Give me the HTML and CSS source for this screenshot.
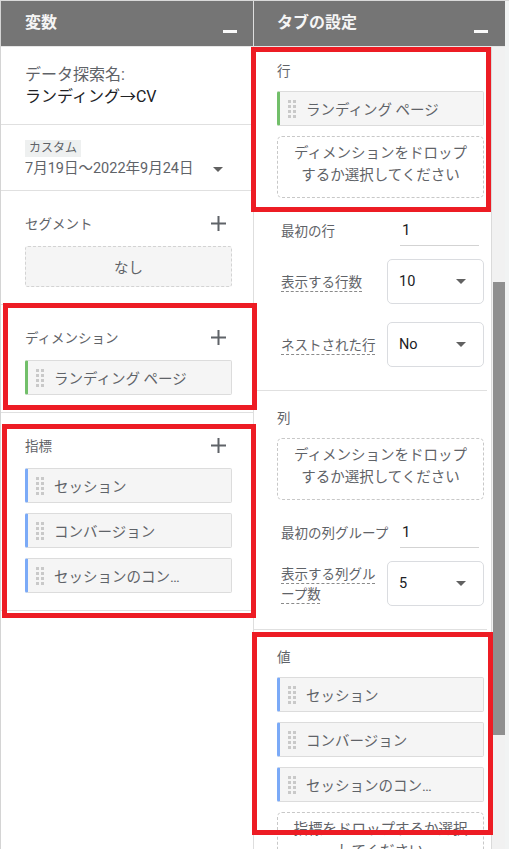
FILE: index.html
```html
<html>
<head>
    <meta charset="utf-8">
    <title>データ探索</title>
    <link rel="stylesheet" href="styles.css">
</head>
<body>
    <div class="app">
        <!-- left pane: variables -->
        <section class="pane pane-vars">
            <div class="pane-head">
                <div class="pane-title">変数</div>
                <div class="minimize"></div>
            </div>
            <div class="var-block name-block">
                <div class="name-label">データ探索名:</div>
                <div class="name-value">ランディング→CV</div>
            </div>
            <div class="var-block date-block">
                <span class="tag">カスタム</span>
                <div class="date-row">
                    <span>7月19日～2022年9月24日</span>
                    <span class="caret"></span>
                </div>
            </div>
            <div class="var-block">
                <div class="var-head">
                    <span>セグメント</span>
                    <svg class="plus" width="15" height="15" viewBox="0 0 15 15"><path d="M7.5 0v15M0 7.5h15"/></svg>
                </div>
                <div class="none-box">なし</div>
            </div>
            <div class="var-block">
                <div class="var-head">
                    <span>ディメンション</span>
                    <svg class="plus" width="15" height="15" viewBox="0 0 15 15"><path d="M7.5 0v15M0 7.5h15"/></svg>
                </div>
                <div class="chip dim">
                    <svg class="grip" width="8" height="18" viewBox="0 0 8 18"><rect x="0" y="0" width="3" height="3"/><rect x="5" y="0" width="3" height="3"/><rect x="0" y="5" width="3" height="3"/><rect x="5" y="5" width="3" height="3"/><rect x="0" y="10" width="3" height="3"/><rect x="5" y="10" width="3" height="3"/><rect x="0" y="15" width="3" height="3"/><rect x="5" y="15" width="3" height="3"/></svg>
                    <span class="chip-text">ランディング ページ</span>
                </div>
            </div>
            <div class="var-block">
                <div class="var-head">
                    <span>指標</span>
                    <svg class="plus" width="15" height="15" viewBox="0 0 15 15"><path d="M7.5 0v15M0 7.5h15"/></svg>
                </div>
                <div class="chip metric">
                    <svg class="grip" width="8" height="18" viewBox="0 0 8 18"><rect x="0" y="0" width="3" height="3"/><rect x="5" y="0" width="3" height="3"/><rect x="0" y="5" width="3" height="3"/><rect x="5" y="5" width="3" height="3"/><rect x="0" y="10" width="3" height="3"/><rect x="5" y="10" width="3" height="3"/><rect x="0" y="15" width="3" height="3"/><rect x="5" y="15" width="3" height="3"/></svg>
                    <span class="chip-text">セッション</span>
                </div>
                <div class="chip metric">
                    <svg class="grip" width="8" height="18" viewBox="0 0 8 18"><rect x="0" y="0" width="3" height="3"/><rect x="5" y="0" width="3" height="3"/><rect x="0" y="5" width="3" height="3"/><rect x="5" y="5" width="3" height="3"/><rect x="0" y="10" width="3" height="3"/><rect x="5" y="10" width="3" height="3"/><rect x="0" y="15" width="3" height="3"/><rect x="5" y="15" width="3" height="3"/></svg>
                    <span class="chip-text">コンバージョン</span>
                </div>
                <div class="chip metric">
                    <svg class="grip" width="8" height="18" viewBox="0 0 8 18"><rect x="0" y="0" width="3" height="3"/><rect x="5" y="0" width="3" height="3"/><rect x="0" y="5" width="3" height="3"/><rect x="5" y="5" width="3" height="3"/><rect x="0" y="10" width="3" height="3"/><rect x="5" y="10" width="3" height="3"/><rect x="0" y="15" width="3" height="3"/><rect x="5" y="15" width="3" height="3"/></svg>
                    <span class="chip-text">セッションのコンバージョン率</span>
                </div>
            </div>
        </section>

        <!-- right pane: tab settings -->
        <section class="pane pane-settings">
            <div class="pane-head">
                <div class="pane-title">タブの設定</div>
                <div class="minimize"></div>
            </div>
            <div class="settings-body">
                <div class="settings-scroll">
                    <div class="set-block first">
                        <div class="set-label">行</div>
                        <div class="chip dim">
                            <svg class="grip" width="8" height="18" viewBox="0 0 8 18"><rect x="0" y="0" width="3" height="3"/><rect x="5" y="0" width="3" height="3"/><rect x="0" y="5" width="3" height="3"/><rect x="5" y="5" width="3" height="3"/><rect x="0" y="10" width="3" height="3"/><rect x="5" y="10" width="3" height="3"/><rect x="0" y="15" width="3" height="3"/><rect x="5" y="15" width="3" height="3"/></svg>
                            <span class="chip-text">ランディング ページ</span>
                        </div>
                        <div class="drop-zone">ディメンションをドロップするか選択してください</div>
                        <div class="field field-top">
                            <div class="field-label">最初の行</div>
                            <div class="text-input">1</div>
                        </div>
                        <div class="field">
                            <div class="field-label"><span class="hint">表示する行数</span></div>
                            <div class="select">10<span class="caret"></span></div>
                        </div>
                        <div class="field">
                            <div class="field-label"><span class="hint">ネストされた行</span></div>
                            <div class="select">No<span class="caret"></span></div>
                        </div>
                    </div>
                    <div class="set-block">
                        <div class="set-label">列</div>
                        <div class="drop-zone">ディメンションをドロップするか選択してください</div>
                        <div class="field field-top">
                            <div class="field-label">最初の列グループ</div>
                            <div class="text-input">1</div>
                        </div>
                        <div class="field">
                            <div class="field-label"><span class="hint">表示する列グループ数</span></div>
                            <div class="select">5<span class="caret"></span></div>
                        </div>
                    </div>
                    <div class="set-block">
                        <div class="set-label">値</div>
                        <div class="chip metric">
                            <svg class="grip" width="8" height="18" viewBox="0 0 8 18"><rect x="0" y="0" width="3" height="3"/><rect x="5" y="0" width="3" height="3"/><rect x="0" y="5" width="3" height="3"/><rect x="5" y="5" width="3" height="3"/><rect x="0" y="10" width="3" height="3"/><rect x="5" y="10" width="3" height="3"/><rect x="0" y="15" width="3" height="3"/><rect x="5" y="15" width="3" height="3"/></svg>
                            <span class="chip-text">セッション</span>
                        </div>
                        <div class="chip metric">
                            <svg class="grip" width="8" height="18" viewBox="0 0 8 18"><rect x="0" y="0" width="3" height="3"/><rect x="5" y="0" width="3" height="3"/><rect x="0" y="5" width="3" height="3"/><rect x="5" y="5" width="3" height="3"/><rect x="0" y="10" width="3" height="3"/><rect x="5" y="10" width="3" height="3"/><rect x="0" y="15" width="3" height="3"/><rect x="5" y="15" width="3" height="3"/></svg>
                            <span class="chip-text">コンバージョン</span>
                        </div>
                        <div class="chip metric">
                            <svg class="grip" width="8" height="18" viewBox="0 0 8 18"><rect x="0" y="0" width="3" height="3"/><rect x="5" y="0" width="3" height="3"/><rect x="0" y="5" width="3" height="3"/><rect x="5" y="5" width="3" height="3"/><rect x="0" y="10" width="3" height="3"/><rect x="5" y="10" width="3" height="3"/><rect x="0" y="15" width="3" height="3"/><rect x="5" y="15" width="3" height="3"/></svg>
                            <span class="chip-text">セッションのコンバージョン率</span>
                        </div>
                        <div class="drop-zone">指標をドロップするか選択してください</div>
                    </div>
                </div>
                <div class="scrollbar"><div class="thumb"></div></div>
            </div>
        </section>
    </div>

    <!-- red highlight frames -->
    <div class="mark mark-rows"></div>
    <div class="mark mark-dim"></div>
    <div class="mark mark-metrics"></div>
    <div class="mark mark-values"></div>
</body>
</html>
```

FILE: styles.css
```css
body {
    margin: 0;
    position: relative;
    height: 849px;
    overflow: hidden;
    background-color: #f1f3f3;
    font-family: Roboto, "Noto Sans CJK JP", sans-serif;
    color: #5f6368;
}
.app {
    display: flex;
    height: 848px;
    border-top: 1px solid #d9d9d9;
}
.pane {
    display: flex;
    flex-direction: column;
    background-color: #ffffff;
}
.pane-vars {
    width: 254px;
    box-sizing: border-box;
    border-left: 1px solid #d4d4d4;
    border-right: 1px solid #dedede;
}
.pane-settings {
    width: 251px;
}
.pane-head {
    height: 45px;
    flex: none;
    display: flex;
    align-items: center;
    background-color: #757575;
    border-bottom: 1px solid #e6e6e6;
    padding: 0 16px 0 24px;
}
.pane-settings .pane-head {
    padding: 0 17px 0 23px;
}
.pane-title {
    flex: 1;
    font-size: 16px;
    font-weight: bold;
    line-height: 22px;
    margin-top: -2px;
    color: #f5f5f5;
}
.minimize {
    width: 14px;
    height: 3px;
    background-color: #fafafa;
    align-self: flex-end;
    margin-bottom: 13px;
}

/* left pane blocks */
.var-block {
    padding: 20px 21px 17px 24px;
    border-bottom: 1px solid #e0e0e0;
}
.name-block {
    padding-top: 17px;
    padding-bottom: 16px;
    font-size: 16px;
    line-height: 22px;
}
.name-value {
    color: #202124;
}
.date-block {
    padding-top: 15px;
    padding-bottom: 11px;
}
.tag {
    display: inline-block;
    height: 17px;
    line-height: 17px;
    padding: 0 4px;
    font-size: 12px;
    background-color: #eef0f0;
    color: #5f6368;
}
.date-row {
    display: flex;
    align-items: center;
    margin-top: 2px;
    font-size: 14.5px;
    line-height: 20px;
}
.date-row .caret {
    margin-left: 19px;
}
.caret {
    width: 0;
    height: 0;
    border-left: 5px solid transparent;
    border-right: 5px solid transparent;
    border-top: 5px solid #616161;
}
.var-head {
    display: flex;
    justify-content: space-between;
    align-items: center;
    height: 24px;
    margin-bottom: 11px;
    font-size: 13.5px;
}
.plus {
    margin-right: 6px;
    stroke: #5f6368;
    stroke-width: 2;
}
.none-box {
    height: 41px;
    box-sizing: border-box;
    display: flex;
    justify-content: center;
    align-items: center;
    border: 1px dashed #d3d3d3;
    border-radius: 3px;
    background-color: #f5f5f5;
    font-size: 14.5px;
}

/* dimension / metric chips */
.chip {
    height: 35px;
    box-sizing: border-box;
    display: flex;
    align-items: center;
    padding-right: 42px;
    background-color: #f5f5f5;
    border: 1px solid #dcdcdc;
    border-radius: 2px;
    font-size: 14.5px;
    color: #5f6368;
}
.chip + .chip {
    margin-top: 10px;
}
.chip.dim {
    border-left: 3px solid #72bf6a;
}
.chip.metric {
    border-left: 3px solid #7baaf7;
}
.grip {
    flex: none;
    margin-left: 8px;
    fill: #c9c9c9;
}
.chip-text {
    flex: 1;
    min-width: 0;
    margin-left: 10px;
    white-space: nowrap;
    overflow: hidden;
    text-overflow: ellipsis;
}

/* right pane */
.settings-body {
    flex: 1;
    min-height: 0;
    display: flex;
    overflow: hidden;
}
.settings-scroll {
    width: 237px;
    padding-right: 4px;
    box-sizing: border-box;
}
.set-block {
    padding: 17px 3px 23px 23px;
    border-bottom: 1px solid #e0e0e0;
}
.set-block.first {
    padding-top: 14px;
}
.set-label {
    font-size: 13.5px;
    line-height: 20px;
    margin-bottom: 10px;
}
.chip + .drop-zone {
    margin-top: 10px;
}
.drop-zone {
    padding: 6px 10px 10px;
    border: 1px dashed #c8c8c8;
    border-radius: 5px;
    text-align: center;
    font-size: 14.5px;
    line-height: 22px;
}
.field {
    display: flex;
    align-items: center;
    height: 45px;
    padding-left: 4px;
    margin-top: 18px;
}
.field-top {
    margin-top: 10px;
}
.field-top + .field {
    margin-top: 6px;
}
.field-label {
    width: 100px;
    font-size: 13.5px;
    line-height: 20px;
}
.field-top .field-label {
    width: auto;
    white-space: nowrap;
}
.hint {
    text-decoration: underline dashed #8a8a8a;
    text-decoration-thickness: 1px;
    text-underline-offset: 4px;
}
.text-input {
    margin-left: auto;
    margin-right: 5px;
    width: 79px;
    height: 31px;
    box-sizing: border-box;
    padding-left: 2px;
    border-bottom: 1px solid #d3d3d3;
    font-size: 15px;
    line-height: 30px;
    color: #202124;
}
.select {
    margin-left: auto;
    width: 97px;
    height: 45px;
    box-sizing: border-box;
    display: flex;
    align-items: center;
    justify-content: space-between;
    padding: 0 17px 0 11px;
    border: 1px solid #dadce0;
    border-radius: 5px;
    font-size: 14.5px;
    color: #202124;
}
.scrollbar {
    width: 14px;
    box-sizing: border-box;
    border-left: 1px solid #dadada;
    background-color: #f1f1f1;
}
.thumb {
    width: 12px;
    height: 453px;
    margin: 235px 0 0 1px;
    background-color: #8f8f8f;
}

/* red highlight frames */
.mark {
    position: absolute;
    box-sizing: border-box;
    border: 5px solid #ed1c24;
    pointer-events: none;
}
.mark-rows {
    left: 251px;
    top: 47px;
    width: 240px;
    height: 165px;
}
.mark-dim {
    left: 3px;
    top: 303px;
    width: 254px;
    height: 107px;
}
.mark-metrics {
    left: 2px;
    top: 424px;
    width: 254px;
    height: 194px;
}
.mark-values {
    left: 252px;
    top: 632px;
    width: 241px;
    height: 203px;
}
```
